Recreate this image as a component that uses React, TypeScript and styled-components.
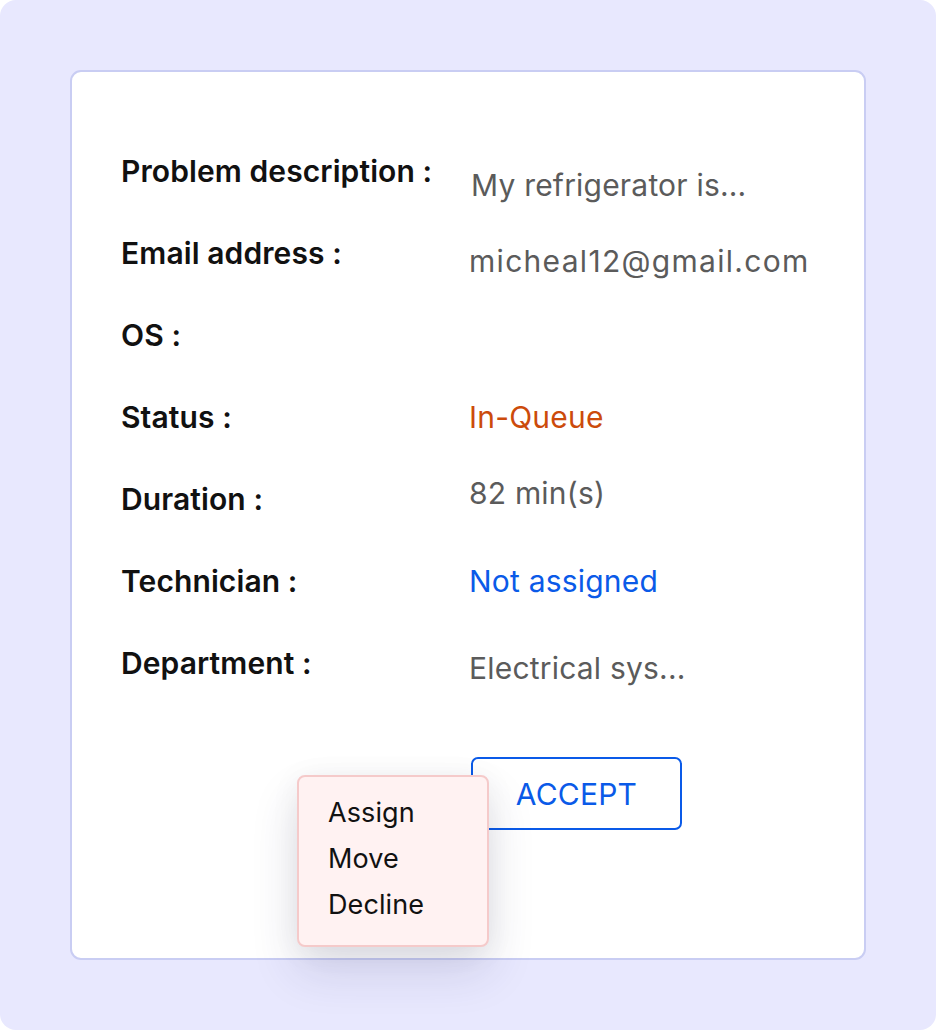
import React from "react";
import styled, { createGlobalStyle } from "styled-components";

const Global = createGlobalStyle`
  html, body { margin: 0; padding: 0; background: #ffffff; }
  #root { width: 936px; height: 1030px; }
  * { box-sizing: border-box; }
`;

const Backdrop = styled.div`
  width: 936px;
  height: 1030px;
  background: #e8e8fe;
  border-radius: 16px;
  padding: 70px 70px 0 70px;
  font-family: "Inter", "Noto Sans", sans-serif;
`;

const Card = styled.section`
  width: 796px;
  height: 890px;
  background: #ffffff;
  border: 2px solid #c9cdf3;
  border-radius: 11px;
  padding: 58px 0 0 49px;
  display: flex;
  flex-direction: column;
`;

const Rows = styled.div`
  display: flex;
  flex-direction: column;
`;

const Row = styled.div`
  display: flex;
  align-items: flex-start;
  height: 82px;
`;

const Label = styled.div`
  width: 348px;
  flex: none;
  height: 82px;
  display: flex;
  align-items: center;
  font-size: 30px;
  font-weight: 600;
  letter-spacing: 0.1px;
  color: #111111;
  white-space: nowrap;
`;

type Tone = "muted" | "warn" | "link";

const toneColor: Record<Tone, string> = {
  muted: "#5b5b5b",
  warn: "#cc4b0b",
  link: "#0a5ae8",
};

const Value = styled.div<{ $tone: Tone; $shift: number; $wide?: boolean }>`
  height: 82px;
  display: flex;
  align-items: center;
  margin-top: ${(p) => p.$shift}px;
  padding-left: ${(p) => (p.$shift > 10 ? 2 : 0)}px;
  font-size: 30px;
  font-weight: 400;
  letter-spacing: ${(p) => (p.$wide ? "1.3px" : "0.2px")};
  color: ${(p) => toneColor[p.$tone]};
  white-space: nowrap;
`;

const Actions = styled.div`
  position: relative;
  margin-top: 53px;
  margin-left: 350px;
  width: 210px;
`;

const AcceptButton = styled.button`
  width: 211px;
  height: 73px;
  border: 2px solid #0a5ae8;
  border-radius: 7px;
  background: #ffffff;
  color: #0a5ae8;
  font-family: "Inter", "Noto Sans", sans-serif;
  font-size: 30px;
  font-weight: 400;
  letter-spacing: 0.2px;
  padding: 0;
  cursor: pointer;
`;

const Menu = styled.ul`
  position: absolute;
  left: -174px;
  top: 18px;
  width: 192px;
  height: 172px;
  margin: 0;
  padding: 12px 0 0 29px;
  list-style: none;
  background: #fff2f2;
  border: 2px solid #f5caca;
  border-radius: 8px;
  box-shadow: 0 24px 48px rgba(40, 40, 90, 0.14), 0 4px 30px rgba(0, 0, 0, 0.06);
  display: flex;
  flex-direction: column;
`;

const MenuItem = styled.li`
  height: 46px;
  display: flex;
  align-items: center;
  font-size: 27px;
  font-weight: 400;
  letter-spacing: 0.1px;
  color: #111111;
  cursor: pointer;
`;

const fields: { label: string; value: string; tone: Tone; shift: number; wide?: boolean }[] = [
  { label: "Problem description :", value: "My refrigerator is...", tone: "muted", shift: 14 },
  { label: "Email address :", value: "micheal12@gmail.com", tone: "muted", shift: 8, wide: true },
  { label: "OS :", value: "", tone: "muted", shift: 0 },
  { label: "Status :", value: "In-Queue", tone: "warn", shift: 0 },
  { label: "Duration :", value: "82 min(s)", tone: "muted", shift: -6 },
  { label: "Technician :", value: "Not assigned", tone: "link", shift: 0 },
  { label: "Department :", value: "Electrical sys...", tone: "muted", shift: 5 },
];

export default function App() {
  return (
    <>
      <Global />
      <Backdrop>
        <Card>
          <Rows>
            {fields.map((f) => (
              <Row key={f.label}>
                <Label>{f.label}</Label>
                <Value $tone={f.tone} $shift={f.shift} $wide={f.wide}>
                  {f.value}
                </Value>
              </Row>
            ))}
          </Rows>
          <Actions>
            <AcceptButton>ACCEPT</AcceptButton>
            <Menu>
              <MenuItem>Assign</MenuItem>
              <MenuItem>Move</MenuItem>
              <MenuItem>Decline</MenuItem>
            </Menu>
          </Actions>
        </Card>
      </Backdrop>
    </>
  );
}
